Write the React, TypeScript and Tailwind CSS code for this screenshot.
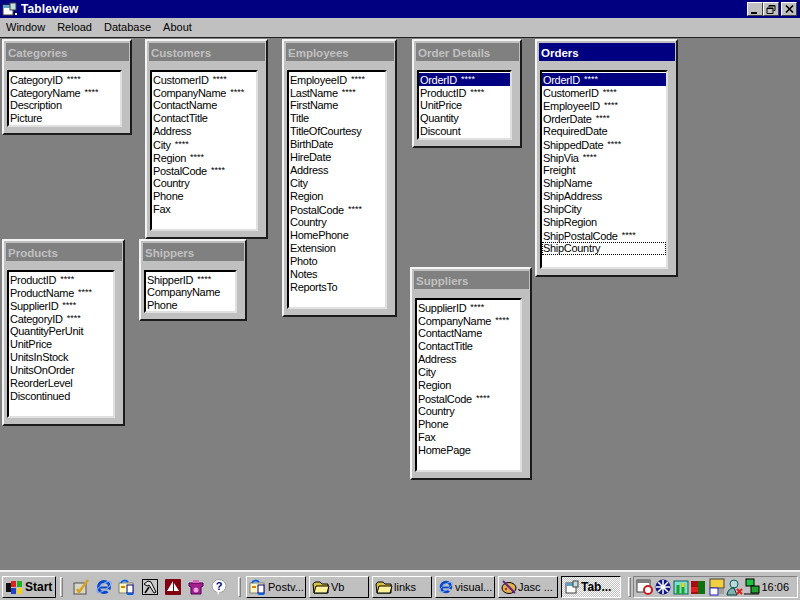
import type { ReactNode } from "react";

interface TableWin {
  title: string;
  x: number;
  y: number;
  w: number;
  h: number;
  fields: string[];
  active?: boolean;
  focus?: string;
}

const windows: TableWin[] = [
  { title: "Categories", x: 2, y: 40, w: 130, h: 96, fields: ["CategoryID *", "CategoryName *", "Description", "Picture"] },
  { title: "Customers", x: 145, y: 40, w: 123, h: 200, fields: ["CustomerID *", "CompanyName *", "ContactName", "ContactTitle", "Address", "City *", "Region *", "PostalCode *", "Country", "Phone", "Fax"] },
  { title: "Employees", x: 282, y: 40, w: 115, h: 278, fields: ["EmployeeID *", "LastName *", "FirstName", "Title", "TitleOfCourtesy", "BirthDate", "HireDate", "Address", "City", "Region", "PostalCode *", "Country", "HomePhone", "Extension", "Photo", "Notes", "ReportsTo"] },
  { title: "Order Details", x: 412, y: 40, w: 110, h: 109, fields: ["OrderID *", "ProductID *", "UnitPrice", "Quantity", "Discount"], focus: "OrderID *" },
  { title: "Orders", x: 535, y: 40, w: 143, h: 238, active: true, fields: ["OrderID *", "CustomerID *", "EmployeeID *", "OrderDate *", "RequiredDate", "ShippedDate *", "ShipVia *", "Freight", "ShipName", "ShipAddress", "ShipCity", "ShipRegion", "ShipPostalCode *", "ShipCountry"], focus: "OrderID *" },
  { title: "Products", x: 2, y: 240, w: 123, h: 187, fields: ["ProductID *", "ProductName *", "SupplierID *", "CategoryID *", "QuantityPerUnit", "UnitPrice", "UnitsInStock", "UnitsOnOrder", "ReorderLevel", "Discontinued"] },
  { title: "Shippers", x: 139, y: 240, w: 108, h: 82, fields: ["ShipperID *", "CompanyName", "Phone"] },
  { title: "Suppliers", x: 410, y: 268, w: 122, h: 213, fields: ["SupplierID *", "CompanyName *", "ContactName", "ContactTitle", "Address", "City", "Region", "PostalCode *", "Country", "Phone", "Fax", "HomePage"] },
];

function FieldText({ name }: { name: string }) {
  const key = name.endsWith(" *");
  return (
    <span className="whitespace-nowrap">
      {key ? name.slice(0, -2) : name}
      {key && <span className="ml-[4px] text-[9px] align-[2px] tracking-normal">****</span>}
    </span>
  );
}

function TableWindow({ win }: { win: TableWin }) {
  return (
    <div
      className="absolute flex flex-col bg-[#c0c0c0] border-2 border-t-[#f4f4f4] border-l-[#f4f4f4] border-r-[#1c1c1c] border-b-[#1c1c1c] pl-[2px] pr-[1px] pt-[2px]"
      style={{ left: win.x, top: win.y, width: win.w, height: win.h }}
    >
      <div className={`h-[18px] shrink-0 pl-[2px] pt-[1px] text-[11.5px] leading-[18px] font-bold ${win.active ? "bg-[#000080] text-white" : "bg-[#808080] text-[#c0c0c0]"}`}>
        {win.title}
      </div>
      <div className="mt-[9px] mb-[6px] ml-[1px] mr-[7px] flex-1 bg-white border-2 border-t-[#000000] border-l-[#000000] border-r-[#e0e0e0] border-b-[#e0e0e0] overflow-hidden pt-[1px] text-black">
        {win.fields.map((f, i) => {
          const selected = win.focus === f && i === 0;
          const dotted = win.active && f === "ShipCountry";
          return (
            <div
              key={f}
              className={`h-[13px] pl-[1px] text-[11px] tracking-[-0.3px] leading-[13px] ${selected ? "bg-[#000080] text-white" : ""} ${dotted ? "outline outline-1 outline-dotted outline-black -outline-offset-1" : ""}`}
            >
              <FieldText name={f} />
            </div>
          );
        })}
      </div>
    </div>
  );
}

function CaptionBtn({ children, className = "" }: { children: ReactNode; className?: string }) {
  return (
    <div className={`w-[16px] h-[14px] bg-[#c0c0c0] border border-t-white border-l-white border-r-[#404040] border-b-[#404040] flex items-center justify-center ${className}`}>
      {children}
    </div>
  );
}

function Folder() {
  return (
    <svg width="18" height="16" viewBox="0 0 18 16" className="shrink-0">
      <path d="M1 5l2-2h5l2 2h6v9H2z" fill="#d8c040" stroke="#000" />
      <path d="M4 7h13l-2 7H2z" fill="#fff09a" stroke="#000" />
    </svg>
  );
}

function NetDoc() {
  return (
    <svg width="18" height="16" viewBox="0 0 18 16" className="shrink-0">
      <rect x="1" y="4" width="14" height="10" fill="#fff8c0" stroke="#808080" />
      <rect x="9" y="6" width="6" height="8" fill="#fff" stroke="#000080" />
      <path d="M3 4c1-3 5-3 7-1M15 14c-1 2-4 2-6 0" fill="none" stroke="#0060e0" strokeWidth="2" />
      <rect x="3" y="7" width="4" height="2" fill="#e08000" />
    </svg>
  );
}

function IeLogo({ size = 18 }: { size?: number }) {
  return (
    <svg width={size} height={size} viewBox="0 0 18 18" className="shrink-0">
      <circle cx="9" cy="9" r="5.5" fill="none" stroke="#0848c8" strokeWidth="3" />
      <path d="M4 9.5h10" stroke="#0848c8" strokeWidth="2" />
      <path d="M13 11l3 1.5-2 2-3-2z" fill="#c0c0c0" />
      <ellipse cx="9" cy="9" rx="8.5" ry="3" fill="none" stroke="#80a8f0" strokeWidth="1" transform="rotate(-35 9 9)" />
    </svg>
  );
}

function TaskBtn({ icon, label, pressed, w }: { icon: ReactNode; label: string; pressed?: boolean; w: number }) {
  return (
    <div
      className={`h-[22px] flex items-center gap-[1px] pl-[2px] overflow-hidden whitespace-nowrap border ${pressed ? "bg-[repeating-conic-gradient(#ffffff_0_25%,#c0c0c0_0_50%)] bg-[length:2px_2px] border-t-black border-l-black border-r-white border-b-white text-[12px] font-bold" : "bg-[#c0c0c0] border-t-white border-l-white border-r-black border-b-black text-[11px]"}`}
      style={{ width: w }}
    >
      {icon}
      <span>{label}</span>
    </div>
  );
}

function Grip() {
  return <div className="w-[3px] h-[20px] bg-[#c0c0c0] border border-t-white border-l-white border-r-[#808080] border-b-[#808080] shrink-0" />;
}

export default function App() {
  return (
    <div className="w-[800px] h-[600px] flex flex-col overflow-hidden bg-[#c0c0c0] font-['Liberation_Sans',Arial,sans-serif] text-black">
      {/* title bar */}
      <div className="h-[18px] shrink-0 bg-[#000080] flex items-center pl-[2px] pr-[3px]">
        <svg width="16" height="14" viewBox="0 0 16 14" className="shrink-0">
          <rect x="1" y="3" width="10" height="10" fill="#fff" stroke="#404040" />
          <rect x="1" y="3" width="10" height="3" fill="#60a0c0" />
          <rect x="8" y="1" width="6" height="7" fill="#c0e0e0" stroke="#404040" />
          <rect x="13" y="11" width="2" height="2" fill="#fff" />
        </svg>
        <span className="ml-[3px] text-white text-[12px] font-bold tracking-[0.1px]">Tableview</span>
        <div className="ml-auto flex items-center">
          <CaptionBtn>
            <div className="w-[6px] h-[2px] bg-black mt-[7px] -ml-[2px]" />
          </CaptionBtn>
          <CaptionBtn>
            <svg width="10" height="9" viewBox="0 0 10 9">
              <path d="M3 2V0.5h6v5H7.5M1 3h6v5.5H1z" fill="none" stroke="#000" />
              <path d="M1 3.5h6M3 1h6" stroke="#000" />
            </svg>
          </CaptionBtn>
          <CaptionBtn className="ml-[2px]">
            <svg width="9" height="8" viewBox="0 0 9 8">
              <path d="M1 0.5l7 7M8 0.5l-7 7" stroke="#000" strokeWidth="1.6" />
            </svg>
          </CaptionBtn>
        </div>
      </div>

      {/* menu */}
      <div className="h-[20px] shrink-0 flex items-center gap-[12px] pl-[6px] text-[11px] border-b border-[#222]">
        <span>Window</span>
        <span>Reload</span>
        <span>Database</span>
        <span>About</span>
      </div>

      {/* MDI client area */}
      <div className="relative flex-1 bg-[#808080]">
        <div className="absolute -top-[39px] left-0">
          {windows.map((win) => (
            <TableWindow key={win.title} win={win} />
          ))}
        </div>
      </div>

      {/* taskbar */}
      <div className="h-[30px] shrink-0 bg-[#c0c0c0] border-t-2 border-t-[#f4f4f4] flex items-center pl-[2px] pr-[2px] pt-[2px]">
        <div className="w-[54px] h-[22px] flex items-center gap-[2px] pl-[3px] bg-[#c0c0c0] border border-t-white border-l-white border-r-black border-b-black text-[12px] font-bold">
          <svg width="17" height="15" viewBox="0 0 17 15" className="shrink-0">
            <path d="M0 3h5v9H0z" fill="#101010" />
            <rect x="5" y="1" width="5" height="6" fill="#e02020" />
            <rect x="11" y="1" width="5" height="6" fill="#20b020" />
            <rect x="5" y="8" width="5" height="6" fill="#2040d0" />
            <rect x="11" y="8" width="5" height="6" fill="#f0d020" />
          </svg>
          Start
        </div>
        <div className="ml-[4px]"><Grip /></div>

        {/* quick launch */}
        <div className="ml-[9px] flex items-center gap-[5px]">
          <svg width="18" height="18" viewBox="0 0 18 18">
            <rect x="2" y="5" width="12" height="11" fill="#d8d8c8" stroke="#505050" />
            <path d="M5 11l2 3 9-12" fill="none" stroke="#d8a020" strokeWidth="2.5" />
          </svg>
          <IeLogo />
          <NetDoc />
          <svg width="18" height="18" viewBox="0 0 18 18">
            <rect x="1.5" y="1.5" width="15" height="15" fill="#c8c8c8" stroke="#000" />
            <path d="M3 6l4-3 3 1 5 10-2 1-5-8-2 1z" fill="#e0e0e0" stroke="#000" />
            <path d="M8 9l-4 6" stroke="#000" strokeWidth="1.5" />
          </svg>
          <svg width="18" height="18" viewBox="0 0 18 18">
            <rect x="1" y="1" width="16" height="16" rx="1" fill="#800010" />
            <path d="M9 3v10H3zM10 5l5 8h-5z" fill="#fff" />
          </svg>
          <svg width="18" height="18" viewBox="0 0 18 18">
            <path d="M2 5h14v3l-2 1v7H4V9L2 8z" fill="#a02090" stroke="#500050" />
            <circle cx="9" cy="12" r="2.5" fill="#f0a0e0" />
            <path d="M6 2h6v3H6z" fill="#e060c0" />
          </svg>
          <svg width="18" height="18" viewBox="0 0 18 18">
            <ellipse cx="9" cy="8" rx="7" ry="6.5" fill="#fff" stroke="#a0a0a0" />
            <path d="M8 17l2-4h-3z" fill="#fff" />
            <text x="9" y="12" textAnchor="middle" fontSize="11" fontWeight="700" fill="#000080" fontFamily="Liberation Sans">?</text>
          </svg>
        </div>
        <div className="ml-[10px]"><Grip /></div>

        {/* running apps */}
        <div className="ml-[5px] flex items-center gap-[3px]">
          <TaskBtn w={60} icon={<NetDoc />} label="Postv..." />
          <TaskBtn w={60} icon={<Folder />} label="Vb" />
          <TaskBtn w={60} icon={<Folder />} label="links" />
          <TaskBtn w={60} icon={<IeLogo size={16} />} label="visual..." />
          <TaskBtn
            w={60}
            icon={
              <svg width="16" height="16" viewBox="0 0 16 16" className="shrink-0">
                <ellipse cx="8" cy="9" rx="7" ry="5.5" fill="#e0b050" stroke="#000" />
                <path d="M2 2l12 12" stroke="#602080" strokeWidth="2" />
                <circle cx="5" cy="10" r="1.2" fill="#d02020" />
              </svg>
            }
            label="Jasc ..."
          />
          <TaskBtn
            w={60}
            pressed
            icon={
              <svg width="16" height="14" viewBox="0 0 16 14" className="shrink-0">
                <rect x="2" y="3" width="10" height="10" fill="#fff" stroke="#404040" />
                <rect x="2" y="3" width="10" height="3" fill="#60a0c0" />
                <rect x="9" y="1" width="5" height="6" fill="#c0e0e0" stroke="#404040" />
              </svg>
            }
            label="Tab..."
          />
        </div>
        <div className="ml-[7px]"><Grip /></div>

        {/* tray */}
        <div className="ml-[2px] w-[165px] h-[22px] flex items-center pl-[2px] border border-t-[#808080] border-l-[#808080] border-r-white border-b-white">
          <svg width="124" height="18" viewBox="0 0 124 18" className="shrink-0">
            <rect x="1" y="2" width="13" height="12" fill="#fff" stroke="#404040" />
            <rect x="1" y="2" width="13" height="3" fill="#808080" />
            <circle cx="12" cy="12" r="4" fill="#fff" stroke="#c02020" strokeWidth="2" />
            <circle cx="27" cy="9" r="7.5" fill="#101880" />
            <path d="M27 2v14M20 9h14M22 4l10 10M32 4L22 14" stroke="#fff" strokeWidth="1.5" />
            <rect x="38" y="3" width="14" height="13" fill="#80e0d0" stroke="#006060" />
            <path d="M42 7v9M47 5v11" stroke="#20a020" strokeWidth="3" />
            <path d="M47 5v4" stroke="#f0d020" strokeWidth="3" />
            <rect x="55" y="3" width="7" height="13" fill="#a01010" />
            <rect x="62" y="3" width="7" height="13" fill="#107010" />
            <rect x="55" y="9" width="7" height="5" fill="#e02020" />
            <rect x="74" y="1" width="14" height="9" fill="#f0d040" stroke="#404040" />
            <rect x="74" y="10" width="8" height="7" fill="#fff" stroke="#2020c0" />
            <rect x="83" y="11" width="5" height="5" fill="#a0a0a0" />
            <circle cx="98" cy="6" r="4" fill="#c0d8d8" stroke="#006060" />
            <path d="M91 17c1-6 4-7 7-7l3 7z" fill="#80b0b0" stroke="#004040" />
            <path d="M101 11l5 5M106 11l-5 5" stroke="#e02020" strokeWidth="2" />
            <rect x="110" y="1" width="8" height="7" fill="#20c040" stroke="#000" />
            <rect x="115" y="8" width="8" height="7" fill="#20a030" stroke="#000" />
            <path d="M108 16h15" stroke="#000" />
          </svg>
          <span className="ml-auto mr-[8px] text-[11px]">16:06</span>
        </div>
      </div>
    </div>
  );
}
